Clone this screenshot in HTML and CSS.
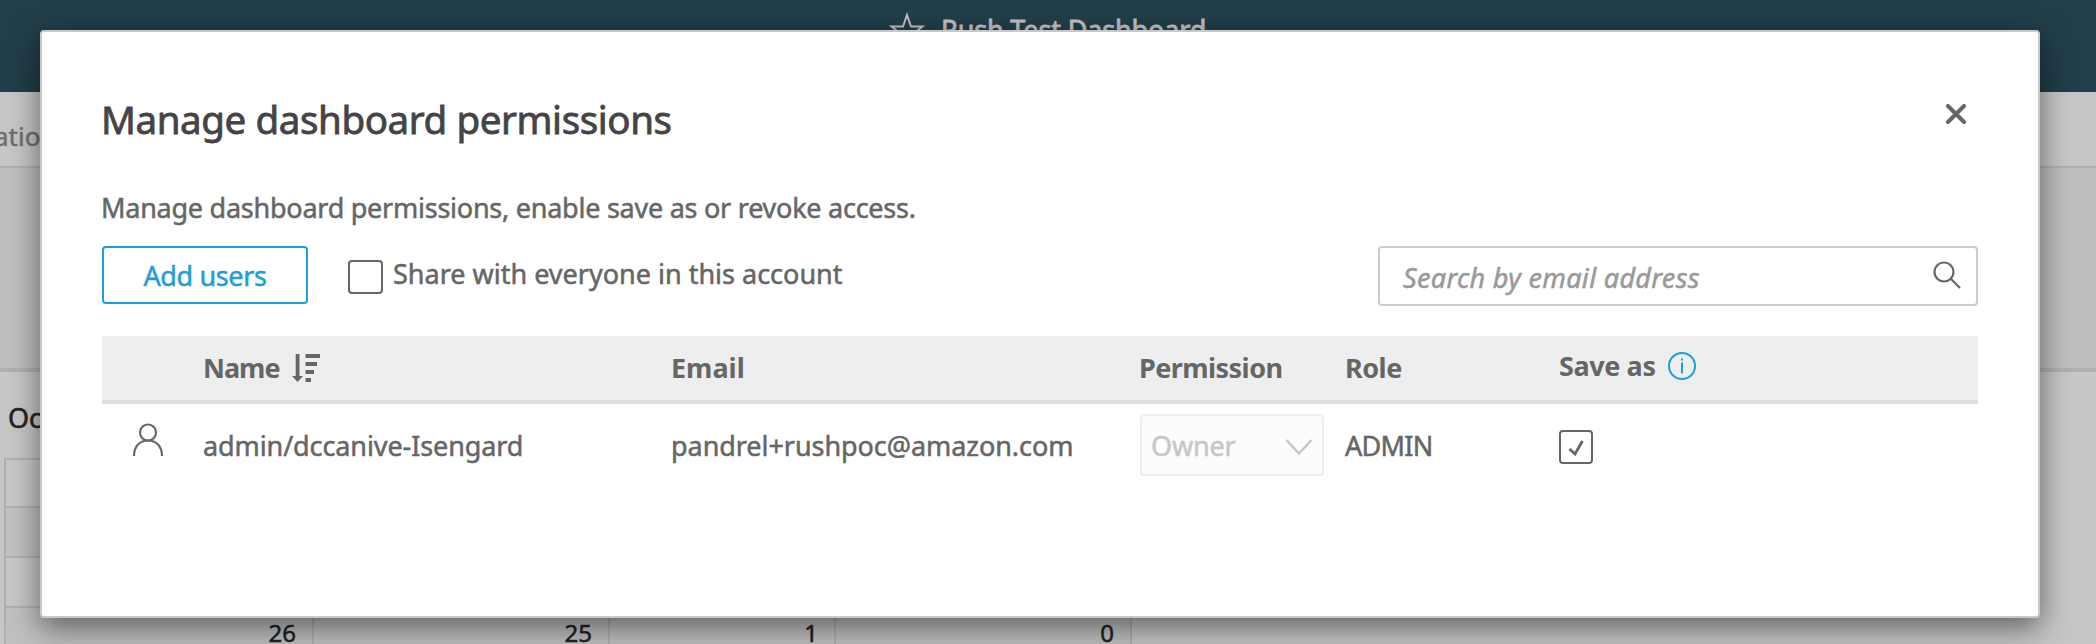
FILE: index.html
```html
<!DOCTYPE html>
<html lang="en">
<head>
<meta charset="utf-8">
<title>Manage dashboard permissions</title>
<link rel="stylesheet" href="styles.css">
</head>
<body>
<div class="page">
  <header class="topbar">
    <svg class="star" width="36" height="36" viewBox="0 0 36 36"><path d="M18 3 L22 14.500 H33.500 L24.500 21.500 L28 33 L18 26 L8 33 L11.500 21.500 L2.500 14.500 H14 Z"/></svg>
    <span class="topbar-title">Rush Test Dashboard</span>
  </header>
  <nav class="subbar"><span>ation</span></nav>
  <div class="filters"></div>
  <main class="sheet">
    <div class="sheet-title">Oc</div>
    <div class="grid">
      <div class="grid-row"></div>
      <div class="grid-row shaded"></div>
      <div class="grid-row"></div>
      <div class="grid-row shaded values"><span>26</span><span>25</span><span>1</span><span>0</span></div>
    </div>
  </main>
</div>

<section class="modal">
  <div class="modal-head">
    <h1>Manage dashboard permissions</h1>
    <svg class="close" width="20" height="20" viewBox="0 0 20 20"><path d="M2 2 L18 18 M18 2 L2 18"/></svg>
  </div>
  <p class="description">Manage dashboard permissions, enable save as or revoke access.</p>
  <div class="tools">
    <button class="add">Add users</button>
    <div class="share">
      <span class="check"></span>
      <span class="share-label">Share with everyone in this account</span>
    </div>
    <div class="search">
      <span>Search by email address</span>
      <svg width="28" height="28" viewBox="0 0 28 28"><circle cx="11" cy="11" r="9.500"/><path d="M17.800 17.800 L27 27"/></svg>
    </div>
  </div>
  <div class="columns table-head">
    <span></span>
    <span class="th-name">Name
      <svg width="28" height="28" viewBox="0 0 28 28"><path d="M3.700 0 H7.500 V22 H11 L5.600 28 L0 22 H3.700 Z M13.500 0 H28 V4 H13.500 Z M13.500 8 H25 V12 H13.500 Z M13.500 16 H22 V20 H13.500 Z M13.500 24 H19 V28 H13.500 Z"/></svg>
    </span>
    <span>Email</span>
    <span class="th-permission">Permission</span>
    <span class="th-role">Role</span>
    <span class="th-save">Save as
      <svg width="28" height="28" viewBox="0 0 28 28"><circle cx="14" cy="14" r="13"/><path d="M14 10.500 V21.500 M14 6.500 V8.500"/></svg>
    </span>
  </div>
  <div class="columns table-row">
    <svg class="person" width="32" height="34" viewBox="0 0 32 34"><circle cx="16" cy="9.500" r="8"/><path d="M2 33 C2 23 8 17.500 16 17.500 S30 23 30 33"/></svg>
    <span class="user">admin/dccanive-Isengard</span>
    <span class="email">pandrel+rushpoc@amazon.com</span>
    <span class="select"><span class="select-value">Owner</span>
      <svg width="28" height="18" viewBox="0 0 28 18"><path d="M1.500 2 L14 15.500 L26.500 2"/></svg>
    </span>
    <span class="role">ADMIN</span>
    <span class="check"><svg width="18" height="18" viewBox="0 0 18 18"><path d="M2.500 11 L8 16 L15.500 3"/></svg></span>
  </div>
</section>
</body>
</html>
```
FILE: styles.css
```css
* { box-sizing: border-box; }

body {
  margin: 0;
  height: 644px;
  overflow: hidden;
  position: relative;
  font: 27px/36px "Noto Sans", "Open Sans", sans-serif;
  color: #666;
  -webkit-text-stroke: 0.5px;
}

svg { display: block; flex: none; fill: none; -webkit-text-stroke: 0; }

/* dimmed dashboard */
.page { height: 644px; overflow: hidden; background: #c6c6c6; }
.topbar {
  height: 92px;
  padding: 12px 0 0 889px;
  display: flex;
  gap: 16px;
  background: #213e4a;
  color: #c1bfbf;
}
.topbar-title { letter-spacing: -0.15px; -webkit-text-stroke: 0.8px; }
.star { stroke: #c1bfbf; stroke-width: 2; }
.subbar {
  height: 76px;
  padding-top: 26px;
  border-bottom: 2px solid #b0b0b0;
  color: #6f6f6f;
}
.subbar span { margin-left: -6px; font-size: 26px; }
.filters { height: 204px; background: #bebebe; border-bottom: 4px solid #b0b0b0; }
.sheet-title { height: 86px; padding: 28px 0 0 8px; color: #222; }
.grid { width: 1128px; margin-left: 4px; border-left: 2px solid #b0b0b0; border-top: 2px solid #b0b0b0; }
.grid-row { height: 50px; border-bottom: 2px solid #b0b0b0; }
.grid-row:first-child { height: 48px; }
.shaded { background: #c0c0c0; }
.values {
  display: grid;
  grid-template-columns: 308px 296px 226px 296px;
  height: 36px;
  border-bottom: 0;
  color: #222;
  font-size: 24px;
}
.values span { border-right: 2px solid #b0b0b0; padding: 11px 16px 0 0; line-height: 28px; text-align: right; }

/* dialog */
.modal {
  position: absolute;
  left: 40px;
  top: 30px;
  width: 2000px;
  height: 588px;
  padding: 61px 60px 0;
  background: #fff;
  border: 2px solid #c8c8c8;
  border-radius: 4px;
  box-shadow: 0 10px 30px rgba(0, 0, 0, 0.5);
}
.modal-head { display: flex; justify-content: space-between; height: 97px; }
h1 {
  margin: 0;
  font-size: 38.500px;
  line-height: 52px;
  font-weight: 400;
  letter-spacing: -0.4px;
  color: #444;
  margin-left: -1px;
  -webkit-text-stroke: 0.8px;
}
.close { margin: 11px 12px 0 0; stroke: #666; stroke-width: 4; stroke-linecap: round; }
.description { margin: 0 0 0 -1px; height: 56px; letter-spacing: -0.25px; }

.tools { display: flex; height: 90px; align-items: flex-start; }
.add {
  width: 206px;
  height: 58px;
  padding: 1px 0 0;
  border: 2px solid #1f9fd9;
  border-radius: 4px;
  background: #fff;
  color: #1f9fd9;
  font: inherit;
  letter-spacing: -0.38px;
  -webkit-text-stroke: 0.5px;
}
.share { display: flex; margin-left: 40px; }
.share-label { margin: 10px 0 0 10px; }
.check {
  width: 34px;
  height: 34px;
  margin-top: 14px;
  border: 2px solid #666;
  border-radius: 4px;
  display: grid;
  place-items: center;
  stroke: #666;
  stroke-width: 2.800;
}
.share .check { width: 35px; }
.search {
  margin-left: auto;
  width: 600px;
  height: 60px;
  padding: 0 15px 0 23px;
  display: flex;
  align-items: center;
  justify-content: space-between;
  border: 2px solid #ccc;
  border-radius: 4px;
  color: #999;
  font-style: italic;
  letter-spacing: 0.32px;
}
.search span { padding-top: 4px; }
.search svg { stroke: #666; stroke-width: 2.200; margin-bottom: 2px; }

.columns { display: grid; grid-template-columns: 101px 468px 469px 205px 214px 1fr; }
.table-head {
  height: 68px;
  padding-top: 14px;
  background: #eee;
  border-bottom: 4px solid #ddd;
  font-weight: 700;
  -webkit-text-stroke: 0;
}
.th-name, .th-save { display: flex; }
.th-name { letter-spacing: -1px; gap: 12px; }
.th-name svg { margin-top: 4px; fill: #666; }
.th-permission { letter-spacing: -0.55px; margin-left: -1px; }
.th-role { letter-spacing: -0.5px; }
.th-save { letter-spacing: -0.4px; gap: 12px; margin-top: -2px; }
.th-save svg { margin-top: 4px; stroke: #1f9fd9; stroke-width: 2; }

.table-row { padding-top: 10px; }
.person { margin: 9px 0 0 30px; stroke: #666; stroke-width: 2.200; }
.user, .email, .role { padding-top: 14px; letter-spacing: -0.1px; }
.email { letter-spacing: -0.06px; }
.role { letter-spacing: -0.7px; }
.select {
  width: 184px;
  height: 62px;
  padding: 0 9px 0 9px;
  display: flex;
  align-items: center;
  justify-content: space-between;
  border: 2px solid #eee;
  border-radius: 4px;
  background: #fcfcfc;
  color: #c6c6c6;
  letter-spacing: -0.2px;
}
.select-value { padding-top: 2px; }
.select svg { stroke: #c6c6c6; stroke-width: 2.500; margin-top: 4px; }
.table-row .check { margin-top: 16px; }
```
